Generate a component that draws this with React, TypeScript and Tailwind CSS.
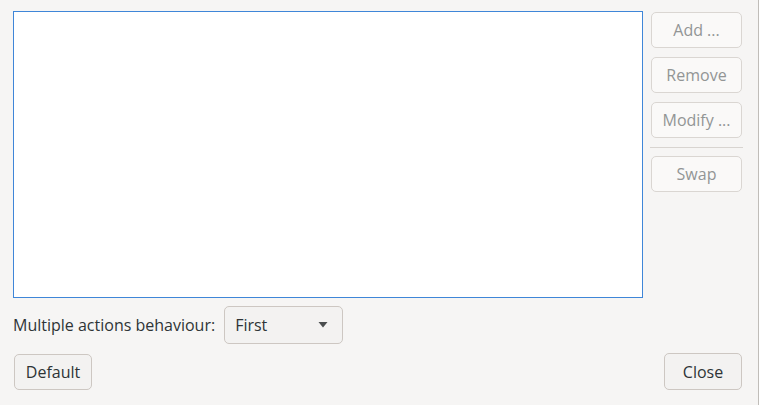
const font = { fontFamily: "'Open Sans', 'Noto Sans', sans-serif" };

function SideButton({ label }: { label: string }) {
  return (
    <button
      disabled
      className="h-[36px] w-[91px] rounded-[5px] border border-[#dad6d2] bg-[#faf9f8] text-[16px] text-[#929595]"
    >
      {label}
    </button>
  );
}

export default function App() {
  return (
    <div
      className="w-[759px] h-[405px] bg-[#f6f5f4] border-r border-[#c0bdb9] flex flex-col px-[13px] pt-[11px] pb-[15px]"
      style={font}
    >
      <div className="flex gap-[8px]">
        <div className="w-[630px] h-[287px] bg-white border border-[#3f86d8]" />
        <div className="flex flex-col pt-[1px]">
          <SideButton label="Add ..." />
          <div className="h-[9px]" />
          <SideButton label="Remove" />
          <div className="h-[9px]" />
          <SideButton label="Modify ..." />
          <div className="h-px bg-[#d8d4d0] w-[93px] -ml-px mt-[9px] mb-[8px]" />
          <SideButton label="Swap" />
        </div>
      </div>

      {/* behaviour selector */}
      <div className="flex items-center gap-[9px] mt-[8px]">
        <span className="text-[16px] text-[#2e3436]">Multiple actions behaviour:</span>
        <button className="h-[38px] w-[119px] rounded-[5px] border border-[#cdc7c2] bg-[#f3f2f1] flex items-center justify-between pl-[10px] pr-[14px] text-[16px] text-[#2e3436]">
          <span>First</span>
          <svg width="10" height="6" viewBox="0 0 10 6">
            <path d="M0.5 0 L9.5 0 L5 5.5 Z" fill="#4a4d4e" />
          </svg>
        </button>
      </div>

      <div className="flex justify-between items-end mt-auto">
        <button className="h-[36px] w-[78px] ml-px rounded-[5px] border border-[#cdc7c2] bg-[#f3f2f1] text-[16px] text-[#2e3436]">
          Default
        </button>
        <button className="h-[37px] w-[78px] mr-[3px] rounded-[5px] border border-[#cdc7c2] bg-[#f3f2f1] text-[16px] text-[#2e3436]">
          Close
        </button>
      </div>
    </div>
  );
}
